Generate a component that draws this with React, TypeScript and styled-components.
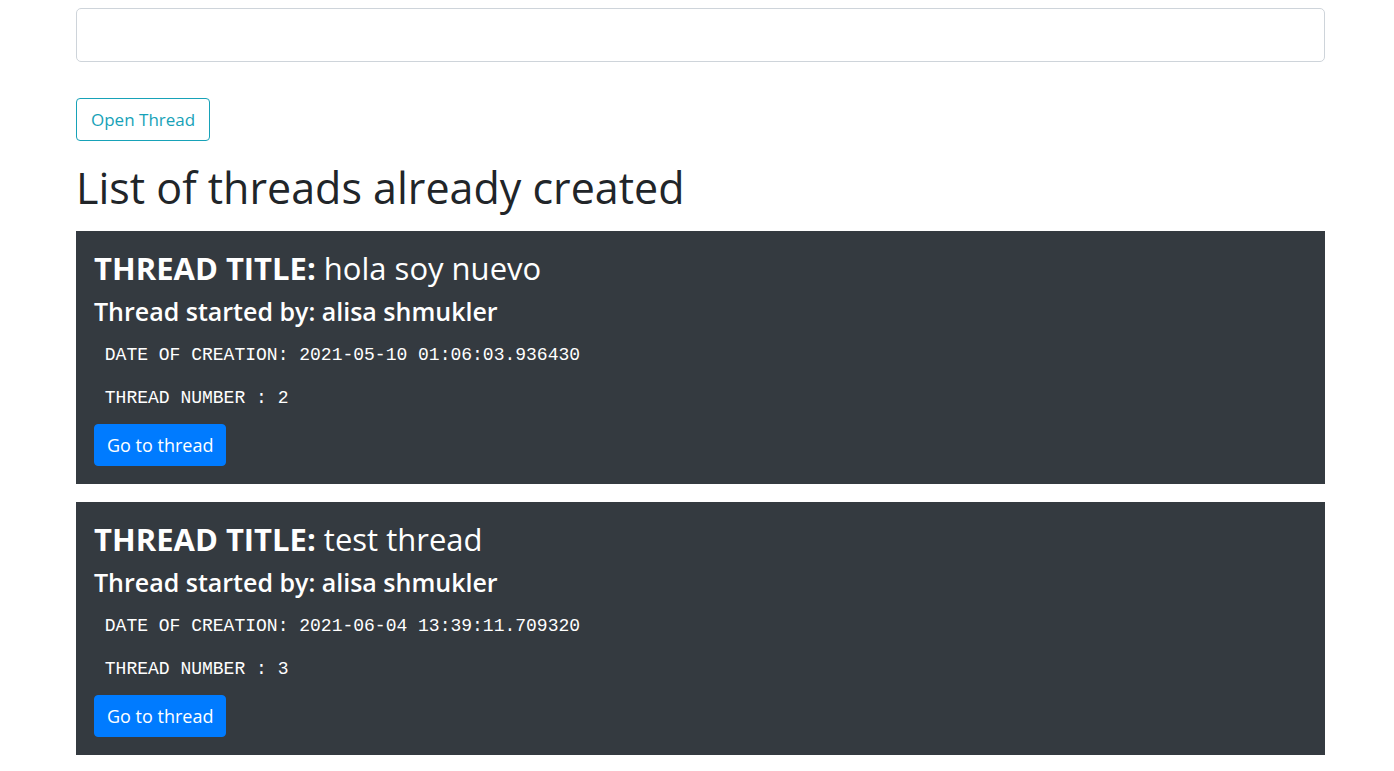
import React from 'react';
import styled, { createGlobalStyle } from 'styled-components';

const GlobalStyle = createGlobalStyle`
  body {
    margin: 0;
    background: #fff;
    font-family: "Open Sans", "Noto Sans", Arial, sans-serif;
    color: #212529;
  }
`;

const Page = styled.div`
  padding: 8px 69px 0 76px;
  display: flex;
  flex-direction: column;
`;

const BigInput = styled.input`
  box-sizing: border-box;
  height: 54px;
  width: 100%;
  border: 1px solid #ced4da;
  border-radius: 5px;
  padding: 8px 18px;
  font-size: 22px;
  font-family: inherit;
  outline: none;
`;

const OutlineButton = styled.button`
  align-self: flex-start;
  box-sizing: border-box;
  height: 43px;
  margin-top: 36px;
  padding: 0 14px;
  background: transparent;
  color: #17a2b8;
  border: 1px solid #17a2b8;
  border-radius: 4px;
  font-family: inherit;
  font-size: 17px;
`;

const Heading = styled.h1`
  margin: 20px 0 16px;
  font-size: 43px;
  font-weight: 500;
  line-height: 54px;
  color: #212529;
`;

const Card = styled.div`
  background: #343a40;
  color: #fff;
  padding: 18px;
  height: 253px;
  box-sizing: border-box;
  margin-bottom: 18px;
  display: flex;
  flex-direction: column;
  align-items: flex-start;
`;

const Title = styled.h3`
  margin: 0 0 8px;
  font-size: 31px;
  font-weight: 500;
  line-height: 38px;

  b {
    font-weight: 700;
  }
`;

const Author = styled.h4`
  margin: 0 0 16px;
  font-size: 25px;
  font-weight: 600;
  line-height: 32px;
`;

const Mono = styled.pre`
  margin: 0 0 18px;
  font-family: "Liberation Mono", "Courier New", monospace;
  font-size: 18px;
  line-height: 25px;
  color: #fff;
`;

const GoButton = styled.button`
  box-sizing: border-box;
  height: 42px;
  margin-top: -5px;
  padding: 0 12px;
  background: #007bff;
  color: #fff;
  border: 1px solid #007bff;
  border-radius: 4px;
  font-family: inherit;
  font-size: 18px;
`;

interface Thread {
  title: string;
  author: string;
  created: string;
  number: number;
}

const threads: Thread[] = [
  { title: 'hola soy nuevo', author: 'alisa shmukler', created: '2021-05-10 01:06:03.936430', number: 2 },
  { title: 'test thread', author: 'alisa shmukler', created: '2021-06-04 13:39:11.709320', number: 3 },
];

export default function App() {
  return (
    <>
      <GlobalStyle />
      <Page>
        <BigInput type="text" />
        <OutlineButton>Open Thread</OutlineButton>
        <Heading>List of threads already created</Heading>
        {threads.map((t) => (
          <Card key={t.number}>
            <Title>
              <b>THREAD TITLE:</b> {t.title}
            </Title>
            <Author>Thread started by: {t.author}</Author>
            <Mono> DATE OF CREATION: {t.created}</Mono>
            <Mono> THREAD NUMBER : {t.number}</Mono>
            <GoButton>Go to thread</GoButton>
          </Card>
        ))}
      </Page>
    </>
  );
}
